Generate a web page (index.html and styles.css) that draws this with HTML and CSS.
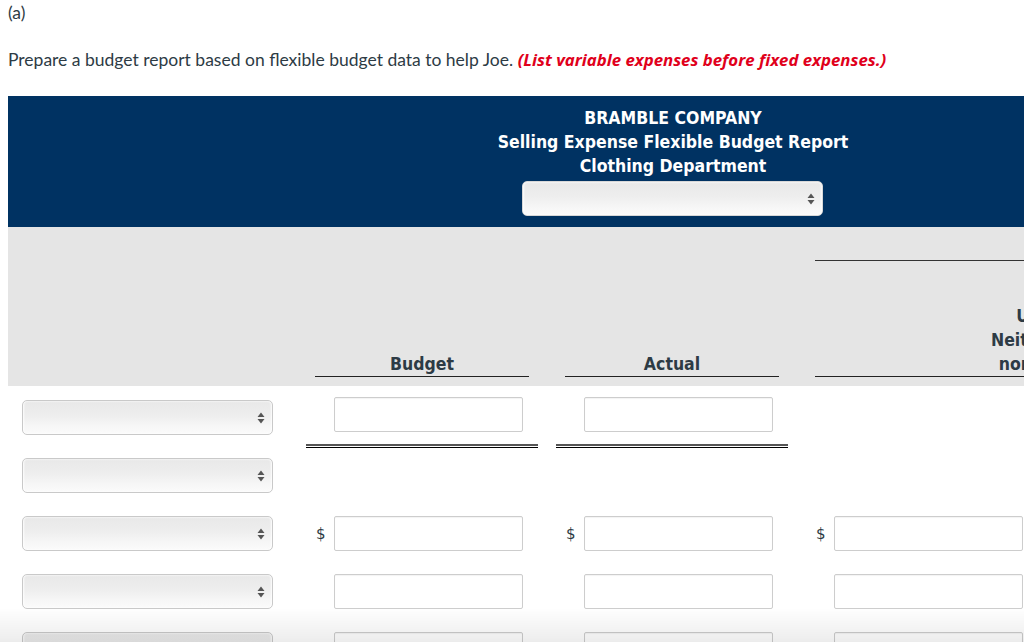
FILE: index.html
```html
<!DOCTYPE html>
<html>
<head>
<meta charset="utf-8">
<link rel="stylesheet" href="styles.css">
</head>
<body>
<p class="part">(a)</p>
<p class="instr">Prepare a budget report based on flexible budget data to help Joe. <span class="red">(List variable expenses before fixed expenses.)</span></p>

<div class="report">
  <div class="rep-head">
    <div class="title">BRAMBLE COMPANY<br>Selling Expense Flexible Budget Report<br>Clothing Department</div>
    <div class="sel sel-head"><svg class="arr" width="8" height="12" viewBox="0 0 8 12"><path d="M4 0.5 L7.5 5 L0.5 5 Z M4 11.5 L7.5 7 L0.5 7 Z" fill="#555"/></svg></div>
  </div>

  <div class="colhead">
    <div class="c1"></div>
    <div class="c"><div class="hd">Budget</div></div>
    <div class="c"><div class="hd">Actual</div></div>
    <div class="c wide"><div class="topline"></div><div class="hd">Favorable<br>Unfavorable<br>Neither Favorable<br>nor Unfavorable</div></div>
  </div>

  <div class="row first">
    <div class="c1"><div class="sel"><svg class="arr" width="8" height="12" viewBox="0 0 8 12"><path d="M4 0.5 L7.5 5 L0.5 5 Z M4 11.5 L7.5 7 L0.5 7 Z" fill="#555"/></svg></div></div>
    <div class="c"><div class="cell-in"><span class="dol"></span><input class="inp" type="text"></div><div class="dbl"></div></div>
    <div class="c"><div class="cell-in"><span class="dol"></span><input class="inp" type="text"></div><div class="dbl"></div></div>
    <div class="c"></div>
  </div>

  <div class="row">
    <div class="c1"><div class="sel"><svg class="arr" width="8" height="12" viewBox="0 0 8 12"><path d="M4 0.5 L7.5 5 L0.5 5 Z M4 11.5 L7.5 7 L0.5 7 Z" fill="#555"/></svg></div></div>
    <div class="c"></div>
    <div class="c"></div>
    <div class="c"></div>
  </div>

  <div class="row">
    <div class="c1"><div class="sel"><svg class="arr" width="8" height="12" viewBox="0 0 8 12"><path d="M4 0.5 L7.5 5 L0.5 5 Z M4 11.5 L7.5 7 L0.5 7 Z" fill="#555"/></svg></div></div>
    <div class="c"><div class="cell-in"><span class="dol">$</span><input class="inp" type="text"></div></div>
    <div class="c"><div class="cell-in"><span class="dol">$</span><input class="inp" type="text"></div></div>
    <div class="c"><div class="cell-in"><span class="dol">$</span><input class="inp" type="text"></div></div>
  </div>

  <div class="row">
    <div class="c1"><div class="sel"><svg class="arr" width="8" height="12" viewBox="0 0 8 12"><path d="M4 0.5 L7.5 5 L0.5 5 Z M4 11.5 L7.5 7 L0.5 7 Z" fill="#555"/></svg></div></div>
    <div class="c"><div class="cell-in"><span class="dol"></span><input class="inp" type="text"></div></div>
    <div class="c"><div class="cell-in"><span class="dol"></span><input class="inp" type="text"></div></div>
    <div class="c"><div class="cell-in"><span class="dol"></span><input class="inp" type="text"></div></div>
  </div>

  <div class="row">
    <div class="c1"><div class="sel"><svg class="arr" width="8" height="12" viewBox="0 0 8 12"><path d="M4 0.5 L7.5 5 L0.5 5 Z M4 11.5 L7.5 7 L0.5 7 Z" fill="#555"/></svg></div></div>
    <div class="c"><div class="cell-in"><span class="dol"></span><input class="inp" type="text"></div></div>
    <div class="c"><div class="cell-in"><span class="dol"></span><input class="inp" type="text"></div></div>
    <div class="c"><div class="cell-in"><span class="dol"></span><input class="inp" type="text"></div></div>
  </div>
</div>

<div class="fade"></div>
</body>
</html>
```

FILE: styles.css
```css
html, body {
  overflow: hidden;
}
body {
  margin: 0;
  padding: 0 8px;
  background: #fff;
  font-family: Lato, "Liberation Sans", sans-serif;
  font-size: 17.5px;
  color: #2d3b45;
}
.part {
  margin: 0;
  padding-top: 3px;
  line-height: 20px;
}
.instr {
  margin: 27px 0 0 0;
  line-height: 20px;
}
.red {
  font-family: "Open Sans", Lato, sans-serif;
  font-size: 16.8px;
  color: #e0001b;
  font-weight: bold;
  font-style: italic;
}
.report {
  width: 1336px;
  margin-top: 26px;
}
.rep-head {
  background: #003262;
  color: #fff;
  padding: 10px 0 11px;
  display: flex;
  flex-direction: column;
  align-items: center;
}
.title {
  font-family: "DejaVu Sans Condensed", "DejaVu Sans", sans-serif;
  font-stretch: condensed;
  font-weight: bold;
  font-size: 17.5px;
  line-height: 24px;
  text-align: center;
  margin-left: -6px;
}
.sel {
  position: relative;
  box-sizing: border-box;
  width: 251px;
  height: 35px;
  border: 1px solid #c9c9c9;
  border-radius: 5px;
  background: linear-gradient(#e8e8e8, #eeeeee 45%, #f6f6f6 75%, #fbfbfb);
  box-shadow: inset 1px 0 2px rgba(255,255,255,0.9), inset -1px 0 2px rgba(255,255,255,0.9);
}
.sel-head {
  width: 301px;
  margin-top: 3px;
  margin-left: -7px;
  border-color: #d8d8d8;
}
.arr {
  position: absolute;
  right: 7px;
  top: 11px;
}
.colhead {
  display: flex;
  height: 159px;
  background: #e5e5e5;
}
.c1 {
  width: 289px;
  flex: none;
  box-sizing: border-box;
}
.c {
  width: 250px;
  flex: none;
  box-sizing: border-box;
}
.colhead .c {
  display: flex;
  flex-direction: column;
  justify-content: flex-end;
  padding-bottom: 9px;
}
.colhead .wide {
  width: 547px;
  justify-content: space-between;
}
.topline {
  margin: 33px 18px 0;
  border-top: 1px solid #333;
}
.hd {
  margin: 0 18px;
  padding-top: 1px;
  border-bottom: 1px solid #222;
  font-family: "DejaVu Sans Condensed", "DejaVu Sans", sans-serif;
  font-stretch: condensed;
  font-weight: bold;
  font-size: 17.5px;
  line-height: 24px;
  text-align: center;
  color: #2d3b45;
}
.row {
  display: flex;
  height: 58px;
}
.colhead + .row {
  margin-top: 2px;
}
.row .c1 {
  padding: 12px 0 0 14px;
}
.row .c {
  padding-top: 12px;
}
.row.first .c {
  padding-top: 9px;
}
.cell-in {
  display: flex;
  align-items: center;
  margin: 0 24px 0 18px;
}
.dol {
  width: 19px;
  flex: none;
  box-sizing: border-box;
  padding-left: 1px;
  font-family: "DejaVu Sans", sans-serif;
  font-size: 15px;
  color: #2d3b45;
}
.inp {
  box-sizing: border-box;
  width: 189px;
  height: 35px;
  margin: 0;
  padding: 0 6px;
  border: 1px solid #cdcdcd;
  border-radius: 2px;
  background: #fff;
  box-shadow: inset 0 1px 1px rgba(0,0,0,0.05);
  font-size: 16px;
  outline: none;
}
.dbl {
  margin: 12px 9px 0;
  height: 1px;
  border-top: 2px solid #555;
  border-bottom: 1px solid #000;
}
.fade {
  position: fixed;
  left: 0;
  right: 0;
  bottom: 0;
  height: 34px;
  background: linear-gradient(rgba(0,0,0,0), rgba(0,0,0,0.075));
  pointer-events: none;
}
```
